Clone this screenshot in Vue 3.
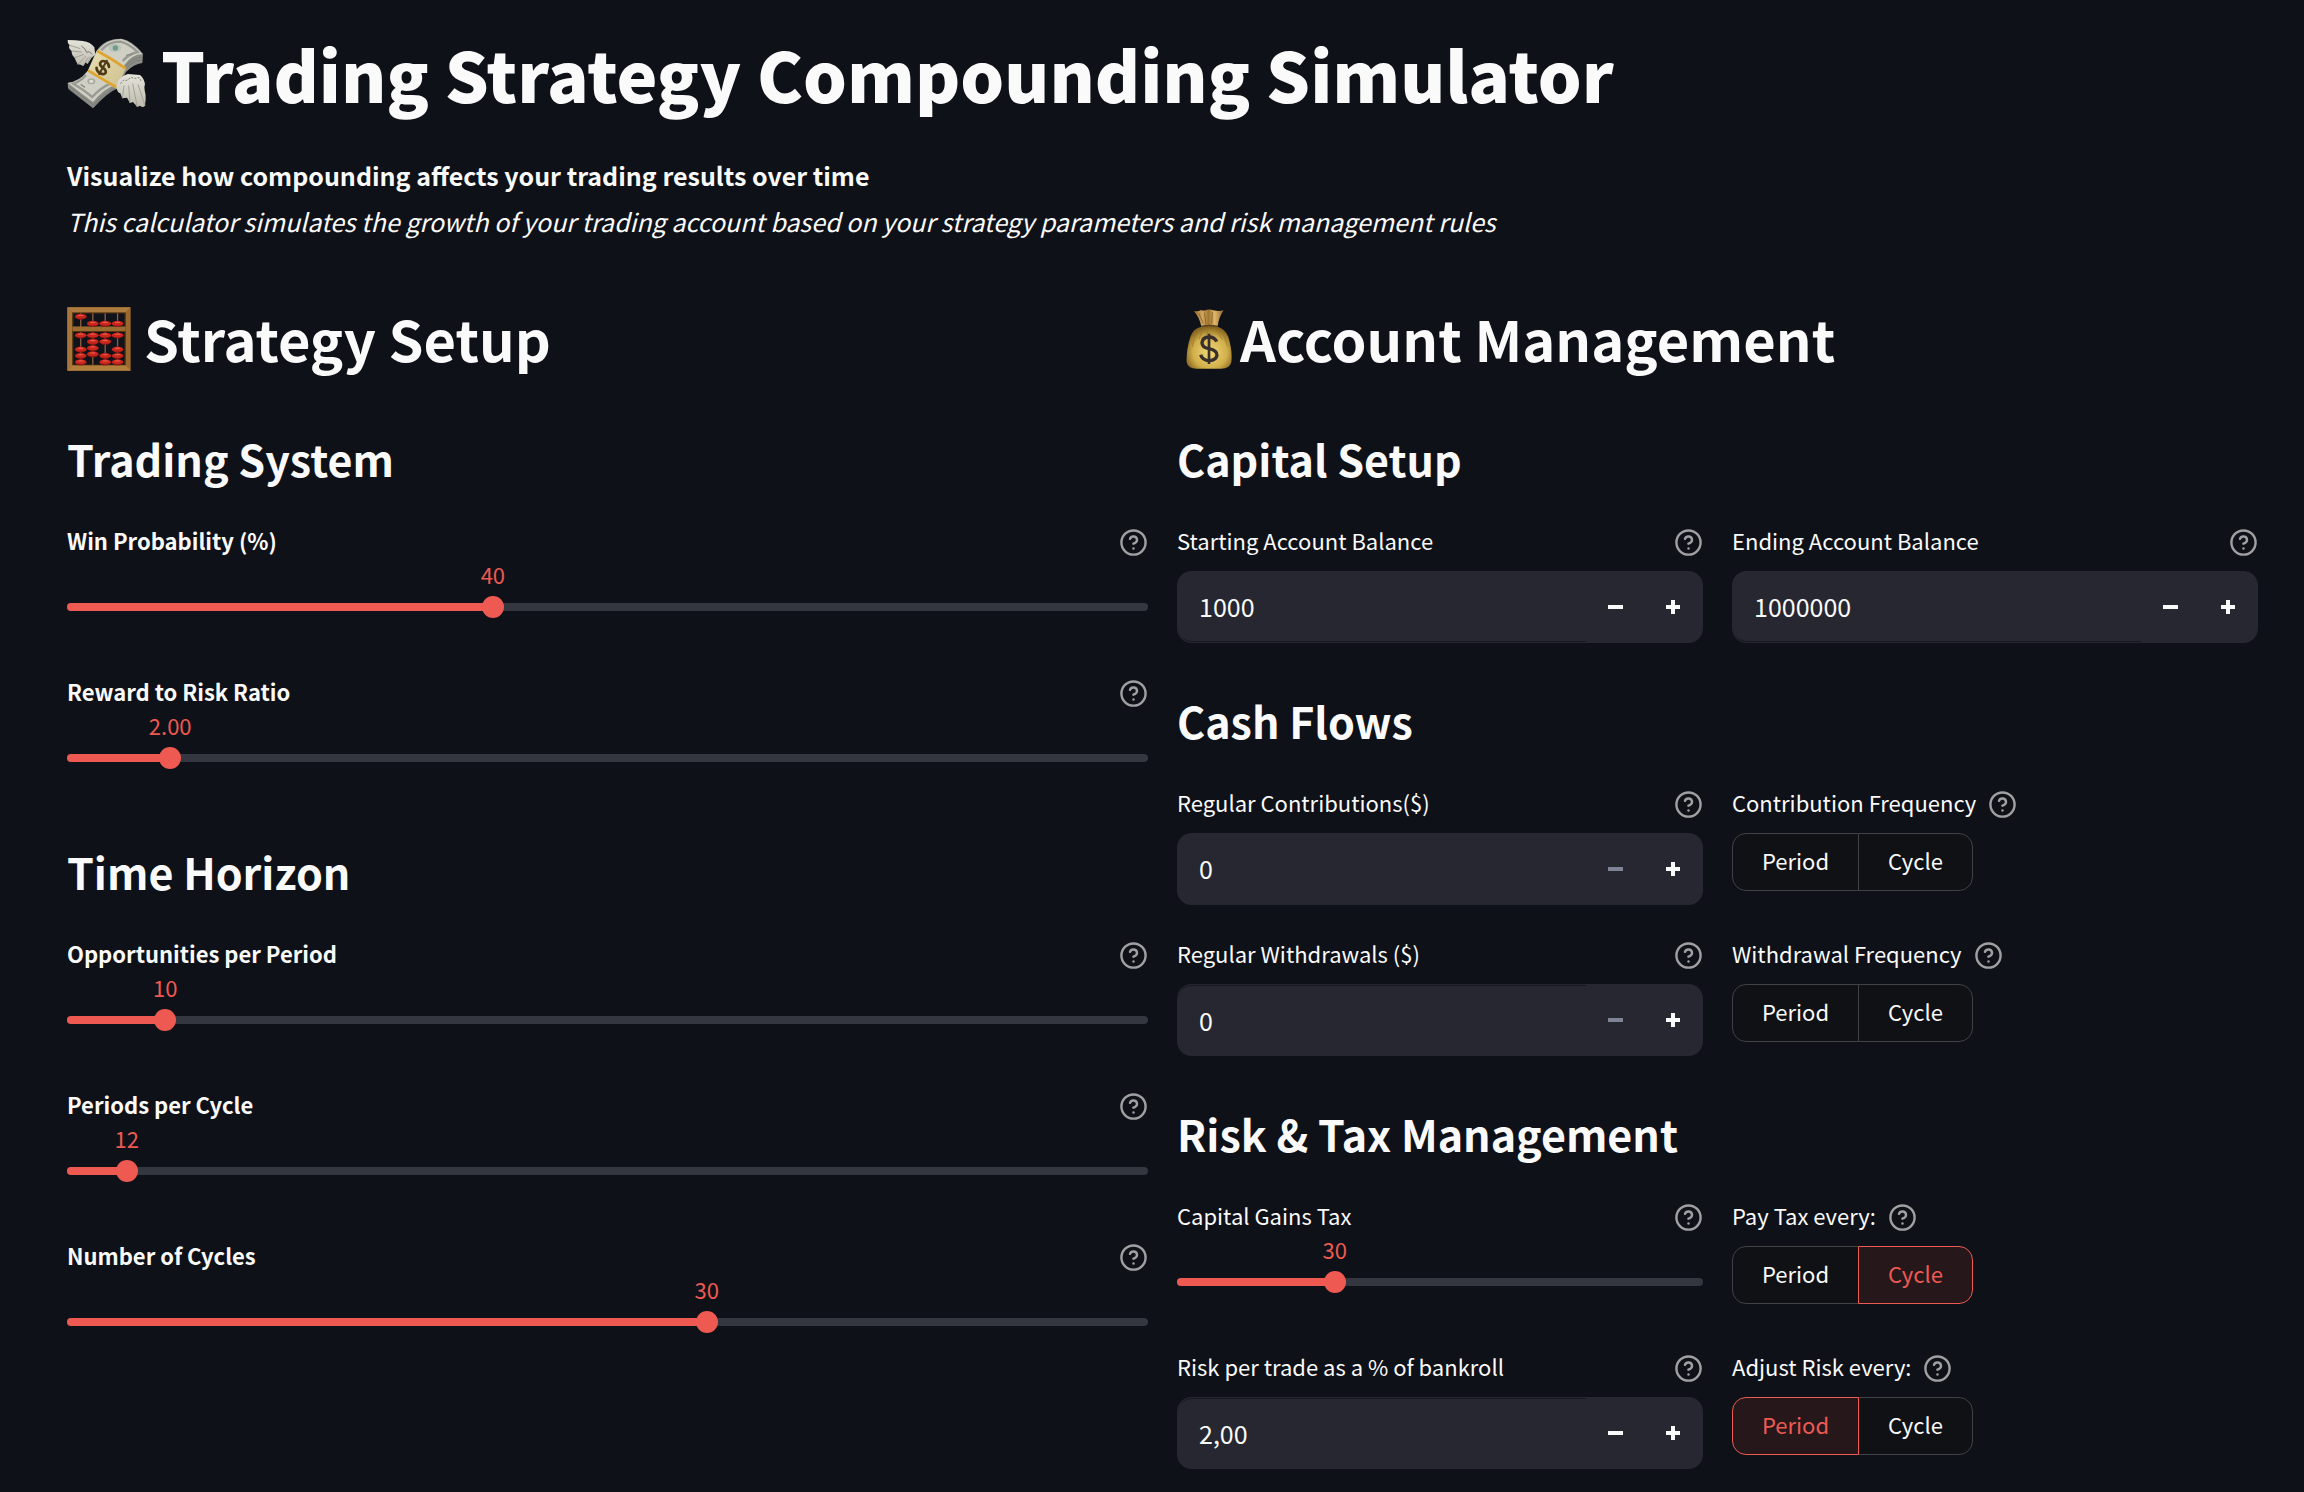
<script setup>
import { reactive, h } from 'vue'

const tradingSystem = reactive([
  { id: 'win-probability', label: 'Win Probability (%)', min: 1, max: 100, step: 1, value: 40, digits: 0 },
  { id: 'reward-risk', label: 'Reward to Risk Ratio', min: 0.1, max: 20, step: 0.1, value: 2, digits: 2 },
])

const timeHorizon = reactive([
  { id: 'opportunities', label: 'Opportunities per Period', min: 1, max: 100, step: 1, value: 10, digits: 0 },
  { id: 'periods', label: 'Periods per Cycle', min: 1, max: 200, step: 1, value: 12, digits: 0 },
  { id: 'cycles', label: 'Number of Cycles', min: 1, max: 50, step: 1, value: 30, digits: 0 },
])

const strategySections = [
  { title: 'Trading System', sliders: tradingSystem },
  { title: 'Time Horizon', sliders: timeHorizon },
]

const accountSections = reactive([
  {
    title: 'Capital Setup',
    fields: [
      { kind: 'number', id: 'start-balance', label: 'Starting Account Balance', value: 1000, step: 100, digits: 0, seam: 'bottom' },
      { kind: 'number', id: 'end-balance', label: 'Ending Account Balance', value: 1000000, step: 1000, digits: 0, seam: 'bottom' },
    ],
  },
  {
    title: 'Cash Flows',
    fields: [
      { kind: 'number', id: 'contributions', label: 'Regular Contributions($)', value: 0, step: 10, digits: 0, seam: 'none' },
      { kind: 'choice', id: 'contribution-frequency', label: 'Contribution Frequency', value: '' },
      { kind: 'number', id: 'withdrawals', label: 'Regular Withdrawals ($)', value: 0, step: 10, digits: 0, seam: 'top' },
      { kind: 'choice', id: 'withdrawal-frequency', label: 'Withdrawal Frequency', value: '' },
    ],
  },
  {
    title: 'Risk & Tax Management',
    fields: [
      { kind: 'slider', id: 'gains-tax', label: 'Capital Gains Tax', min: 0, max: 100, step: 1, value: 30, digits: 0 },
      { kind: 'choice', id: 'tax-interval', label: 'Pay Tax every:', value: 'Cycle' },
      { kind: 'number', id: 'risk-per-trade', label: 'Risk per trade as a % of bankroll', value: 2, step: 0.1, digits: 2, seam: 'top' },
      { kind: 'choice', id: 'risk-interval', label: 'Adjust Risk every:', value: 'Period' },
    ],
  },
])

const options = ['Period', 'Cycle']

const percent = (s) => `${((s.value - s.min) / (s.max - s.min)) * 100}%`
const display = (f) => f.value.toFixed(f.digits).replace('.', ',')
const nudge = (f, dir) => { f.value = Math.max(0, f.value + dir * f.step) }
const commit = (f, e) => {
  const n = parseFloat(e.target.value.replace(',', '.'))
  if (!Number.isNaN(n)) f.value = Math.max(0, n)
}

const HelpIcon = () =>
  h('svg', { viewBox: '0 0 24 24', width: 29, height: 29, fill: 'none', stroke: 'currentColor', 'stroke-width': 2, 'stroke-linecap': 'round', 'stroke-linejoin': 'round', 'aria-hidden': 'true' }, [
    h('circle', { cx: 12, cy: 12, r: 10 }),
    h('path', { d: 'M9.09 9a3 3 0 0 1 5.83 1c0 2-3 3-3 3' }),
    h('path', { d: 'M12 17h.01' }),
  ])

const upperBeads = [[64, 48], [100, 69], [137, 69], [174, 69]]
const lowerBeads = [
  [64, 104], [64, 146], [64, 165], [64, 184],
  [100, 104], [100, 123], [100, 142], [100, 160],
  [137, 104], [137, 123], [137, 165], [137, 184],
  [174, 104], [174, 146], [174, 165], [174, 184],
]
</script>

<template>
  <main class="page">
    <h1>
      <svg class="money" viewBox="21 21 237 213" width="79" height="71" aria-hidden="true">
        <defs>
          <linearGradient id="wing" x1="0" y1="0" x2="0" y2="1">
            <stop offset="0" stop-color="#e4e3db" />
            <stop offset="1" stop-color="#bdbbae" />
          </linearGradient>
          <linearGradient id="strap" x1="0" y1="0" x2="1" y2="1">
            <stop offset="0" stop-color="#e9dfb4" />
            <stop offset="1" stop-color="#cdbf8d" />
          </linearGradient>
        </defs>
        <path d="M109 60Q134 22 184 23Q217 28 249 68L247 96Q221 99 198 123L176 170Q140 185 99 232L24 172L23 155Q58 151 83 119Z" fill="#8b8d86" />
        <path d="M113 58Q140 24 184 24Q216 32 247 69Q216 70 194 101L169 161Q134 170 99 213Q64 188 24 156Q61 151 84 119Z" fill="#d0cfc3" />
        <path d="M124 58Q145 32 181 32Q207 38 233 63Q207 69 188 90" fill="none" stroke="#9a9a94" stroke-width="7" />
        <path d="M78 132Q62 151 40 158Q70 175 97 198Q121 171 151 158" fill="none" stroke="#9a9a94" stroke-width="7" />
        <path d="M150 41Q166 35 179 42Q188 51 178 60Q164 67 151 59Q140 50 150 41Z" fill="#b9c4b8" />
        <circle cx="166" cy="51" r="8" fill="#6f9d8a" />
        <ellipse cx="94" cy="151" rx="12" ry="9" fill="#aaa99f" />
        <ellipse cx="94" cy="151" rx="6" ry="5" fill="#e2e1d6" />
        <path d="M198 73l20-4M62 160l13 9" stroke="#8c8d87" stroke-width="4" />
        <path d="M25 174l74 56Q138 185 174 169M28 166l72 56Q142 176 174 166M247 86Q219 88 198 112M247 78Q219 80 196 105" fill="none" stroke="#73756f" stroke-width="2" />
        <path d="M112 57Q151 80 198 111L169 173Q126 148 83 122Z" fill="url(#strap)" />
        <path d="M112 60Q154 82 198 113" fill="none" stroke="#dea42f" stroke-width="8" />
        <path d="M84 118Q126 144 170 169" fill="none" stroke="#dea42f" stroke-width="8" />
        <g transform="translate(129 109) rotate(30)" fill="none" stroke="#4f3a18" stroke-width="8" stroke-linecap="round">
          <path d="M15-10Q9-19-1-19Q-15-17-14-8Q-13 0 0 1Q15 3 15 11Q14 19 1 20Q-11 20-16 11" />
          <path d="M0-23V23" stroke-width="6" />
        </g>
        <path d="M23 27Q45 27 68 30Q92 33 103 49L106 71L95 80Q88 92 82 99L77 94L69 105L62 101L53 100Q47 89 44 80Q34 72 35 60Q23 51 29 43Q21 35 23 27Z" fill="url(#wing)" />
        <path d="M29 43L61 53M35 60L66 63M44 80L72 70M53 100L78 76M69 105L85 79M82 99L92 77" stroke="#a3a196" stroke-width="3" />
        <path d="M64 45l10 8 6 11 8-2 8 8" fill="none" stroke="#77766e" stroke-width="3" />
        <path d="M169 167L175 148Q188 133 204 129L240 132Q252 142 255 159Q252 166 254 178Q258 193 257 204L255 224Q249 232 240 224L232 228L219 213L210 216L201 200L187 202L181 187Q171 185 169 167Z" fill="url(#wing)" />
        <path d="M187 202L192 164M210 216L206 164M232 228L218 158M255 224L234 160" stroke="#a3a196" stroke-width="3" />
        <path d="M181 158l9-10 11 0 12-9 11 3 14-2 7 13" fill="none" stroke="#83827b" stroke-width="3" stroke-dasharray="6 4" />
      </svg>
      <span>Trading Strategy Compounding Simulator</span>
    </h1>

    <p class="intro">
      <strong>Visualize how compounding affects your trading results over time</strong><br />
      <em>This calculator simulates the growth of your trading account based on your strategy parameters and risk management rules</em>
    </p>

    <div class="columns">
      <section class="strategy">
        <h2>
          <svg class="abacus" viewBox="23 20 191 191" width="64" height="64" aria-hidden="true">
            <rect x="24" y="21" width="189" height="189" fill="#99682f" />
            <path d="M24 21H213L198 36H39Z" fill="#ae7c3f" />
            <path d="M24 21L39 36V194L24 210Z" fill="#a8763a" />
            <path d="M24 210L39 194H198L213 210Z" fill="#b17e3c" />
            <rect x="38" y="36" width="161" height="158" fill="#5c3b17" />
            <rect x="42" y="39" width="153" height="153" fill="#10131a" />
            <path d="M64 39V192M100 39V192M137 39V192M174 39V192" stroke="#8f5b42" stroke-width="4" />
            <rect x="39" y="78" width="159" height="15" fill="#9b6b30" />
            <path d="M39 93H198" stroke="#53340f" stroke-width="3" />
            <g v-for="([x, y], i) in [...upperBeads, ...lowerBeads]" :key="i">
              <ellipse :cx="x" :cy="y + 1" rx="17" ry="9" fill="#861612" />
              <ellipse :cx="x" :cy="y" rx="17" ry="7" fill="#c9261d" />
              <ellipse :cx="x" :cy="y - 3" rx="9" ry="2" fill="#f0594a" />
            </g>
          </svg>
          <span>Strategy Setup</span>
        </h2>

        <section v-for="section in strategySections" :key="section.title">
          <h3>{{ section.title }}</h3>
          <div class="stack">
            <div v-for="s in section.sliders" :key="s.id" class="field">
              <div class="label-row">
                <label :for="s.id" class="strong">{{ s.label }}</label>
                <button type="button" class="help" :aria-label="`Help: ${s.label}`"><HelpIcon /></button>
              </div>
              <div class="slider">
                <output :for="s.id" :style="{ left: percent(s) }">{{ s.value.toFixed(s.digits) }}</output>
                <div class="track"><div class="fill" :style="{ width: percent(s) }"></div></div>
                <input :id="s.id" v-model.number="s.value" type="range" :min="s.min" :max="s.max" :step="s.step" />
              </div>
            </div>
          </div>
        </section>
      </section>

      <section class="account">
        <h2 class="tight">
          <svg class="bag" viewBox="32 25 136 180" width="46" height="60" aria-hidden="true">
            <defs>
              <radialGradient id="sack" cx=".52" cy=".62" r=".58">
                <stop offset="0" stop-color="#f0d878" />
                <stop offset=".65" stop-color="#d2b04b" />
                <stop offset="1" stop-color="#896620" />
              </radialGradient>
              <linearGradient id="ruffle" x1="0" y1="0" x2="1" y2="0">
                <stop offset="0" stop-color="#8e672b" />
                <stop offset=".3" stop-color="#d3a75c" />
                <stop offset=".5" stop-color="#9f742f" />
                <stop offset=".7" stop-color="#dfb76b" />
                <stop offset="1" stop-color="#8e672b" />
              </linearGradient>
            </defs>
            <path d="M54 31Q67 33 76 28Q84 32 94 27Q104 25 113 29Q130 33 144 29Q129 50 126 78H77Q72 50 54 31Z" fill="url(#ruffle)" />
            <path d="M77 78Q100 72 126 78Q148 84 158 108Q171 151 167 184Q163 204 136 204H63Q36 204 33 185Q31 151 44 108Q54 82 77 78Z" fill="url(#sack)" />
            <path d="M71 86Q56 105 50 139M88 83Q76 95 70 116M115 83Q132 97 140 117M129 86Q149 105 155 137M96 82L95 101" fill="none" stroke="#99762d" stroke-width="3" opacity=".65" />
            <path d="M76 77Q101 72 127 77" fill="none" stroke="#59401c" stroke-width="4" />
            <path d="M86 36L91 70M110 34L108 70M70 39L83 69" stroke="#765122" stroke-width="3" opacity=".65" />
            <path d="M123 123Q117 109 100 109Q80 110 79 126Q79 140 100 144Q124 149 124 164Q122 179 101 180Q80 179 75 162" fill="none" stroke="#382e2c" stroke-width="10" />
            <path d="M100 99V190" stroke="#382e2c" stroke-width="8" />
          </svg>
          <span>Account Management</span>
        </h2>

        <section v-for="section in accountSections" :key="section.title">
          <h3>{{ section.title }}</h3>
          <div class="pairs">
            <div v-for="f in section.fields" :key="f.id" class="field">
              <div class="label-row" :class="{ inline: f.kind === 'choice' }">
                <span v-if="f.kind === 'choice'" :id="f.id" class="caption">{{ f.label }}</span>
                <label v-else :for="f.id">{{ f.label }}</label>
                <button type="button" class="help" :aria-label="`Help: ${f.label}`"><HelpIcon /></button>
              </div>

              <div v-if="f.kind === 'number'" class="number">
                <input
                  :id="f.id"
                  type="text"
                  inputmode="decimal"
                  :class="`seam-${f.seam}`"
                  :value="display(f)"
                  @change="commit(f, $event)"
                />
                <button type="button" :aria-label="`Decrease ${f.label}`" :disabled="f.value <= 0" @click="nudge(f, -1)">
                  <svg viewBox="0 0 15 15" width="15" height="15" aria-hidden="true"><path d="M0 5H15V9H0Z" fill="currentColor" /></svg>
                </button>
                <button type="button" :aria-label="`Increase ${f.label}`" @click="nudge(f, 1)">
                  <svg viewBox="0 0 15 15" width="15" height="15" aria-hidden="true"><path d="M5 0H9V5H14V9H9V14H5V9H0V5H5Z" fill="currentColor" /></svg>
                </button>
              </div>

              <div v-else-if="f.kind === 'slider'" class="slider">
                <output :for="f.id" :style="{ left: percent(f) }">{{ f.value.toFixed(f.digits) }}</output>
                <div class="track"><div class="fill" :style="{ width: percent(f) }"></div></div>
                <input :id="f.id" v-model.number="f.value" type="range" :min="f.min" :max="f.max" :step="f.step" />
              </div>

              <div v-else class="segmented" role="group" :aria-labelledby="f.id">
                <button
                  v-for="o in options"
                  :key="o"
                  type="button"
                  :class="{ active: f.value === o }"
                  :aria-pressed="f.value === o"
                  @click="f.value = o"
                >{{ o }}</button>
              </div>
            </div>
          </div>
        </section>
      </section>
    </div>
  </main>
</template>

<style>
body {
  background: #0e1117;
}
</style>

<style scoped>
.page {
  box-sizing: border-box;
  min-height: 100vh;
  padding: 26px 46px 23px 67px;
  background: #0e1117;
  color: #fafafa;
  font-family: "Noto Sans CJK SC", "Noto Sans", sans-serif;
  font-size: 22px;
}

.page * {
  box-sizing: border-box;
}

svg {
  display: block;
  flex: none;
}

button,
input {
  margin: 0;
  padding: 0;
  border: 0;
  background: none;
  color: inherit;
  font: inherit;
}

button {
  cursor: pointer;
}

h1,
h2,
h3,
p {
  margin: 0;
}

h1,
h2 {
  display: flex;
  align-items: center;
}

h1 {
  gap: 15px;
  font-size: 69px;
  font-weight: 900;
  line-height: 94px;
}

h2 {
  gap: 13px;
  margin-bottom: 32px;
  font-size: 56px;
  font-weight: 700;
  line-height: 76px;
}

h2 span {
  padding-bottom: 2px;
}

h2.tight {
  gap: 8px;
  padding-left: 9px;
}

h3 {
  padding: 18px 0 33px;
  font-size: 43px;
  font-weight: 700;
  line-height: 60px;
}

.intro {
  margin: 32px 0 56px;
  font-size: 25px;
  line-height: 46px;
}

.columns {
  display: grid;
  grid-template-columns: minmax(0, 1fr) minmax(0, 1fr);
  gap: 29px;
}

.stack {
  display: grid;
  gap: 29px;
}

.pairs {
  display: grid;
  grid-template-columns: minmax(0, 1fr) minmax(0, 1fr);
  gap: 29px;
}

section > section + section {
  margin-top: 29px;
}

.field {
  min-height: 122px;
}

.label-row {
  display: flex;
  align-items: center;
  justify-content: space-between;
  height: 43px;
  margin-bottom: 7px;
}

.label-row.inline {
  justify-content: flex-start;
  gap: 12px;
}

label,
.caption {
  padding-bottom: 6px;
  line-height: 36px;
}

.strong {
  font-weight: 700;
}

.help {
  color: #a0a0a2;
}

.slider {
  position: relative;
  height: 72px;
  padding-top: 32px;
}

.slider output {
  position: absolute;
  top: -11px;
  transform: translateX(-50%);
  color: #ee5a52;
  line-height: 28px;
}

.track {
  height: 8px;
  border-radius: 4px;
  background: #353740;
  overflow: hidden;
}

.fill {
  height: 8px;
  background: #ee5a52;
}

.slider input {
  position: absolute;
  top: 25px;
  left: -11px;
  width: calc(100% + 22px);
  height: 22px;
  appearance: none;
  cursor: pointer;
}

.slider input::-webkit-slider-thumb {
  width: 22px;
  height: 22px;
  border-radius: 50%;
  background: #ee5a52;
  appearance: none;
}

.number {
  display: flex;
  height: 72px;
  border: 1px solid #262730;
  border-radius: 14px;
  background: #262730;
  overflow: hidden;
}

.number input {
  flex: 1;
  min-width: 0;
  padding: 0 21px 2px;
  border: 0 solid #16181f;
  border-radius: 14px 0 0 14px;
  font-size: 25px;
}

.number input.seam-bottom {
  border-bottom-width: 1px;
}

.number input.seam-top {
  border-top-width: 1px;
}

.number button {
  display: grid;
  place-items: center;
  width: 58px;
}

.number button:disabled {
  color: #808295;
  cursor: default;
}

.segmented {
  display: inline-flex;
  height: 58px;
}

.segmented button {
  padding: 0 29px 4px;
  border: 1px solid #414247;
  background: #101115;
}

.segmented button:first-child {
  border-radius: 14px 0 0 14px;
}

.segmented button:last-child {
  margin-left: -1px;
  border-radius: 0 14px 14px 0;
}

.segmented button.active {
  z-index: 1;
  border-color: #ee5a52;
  background: #26171b;
  color: #ee5a52;
}
</style>
